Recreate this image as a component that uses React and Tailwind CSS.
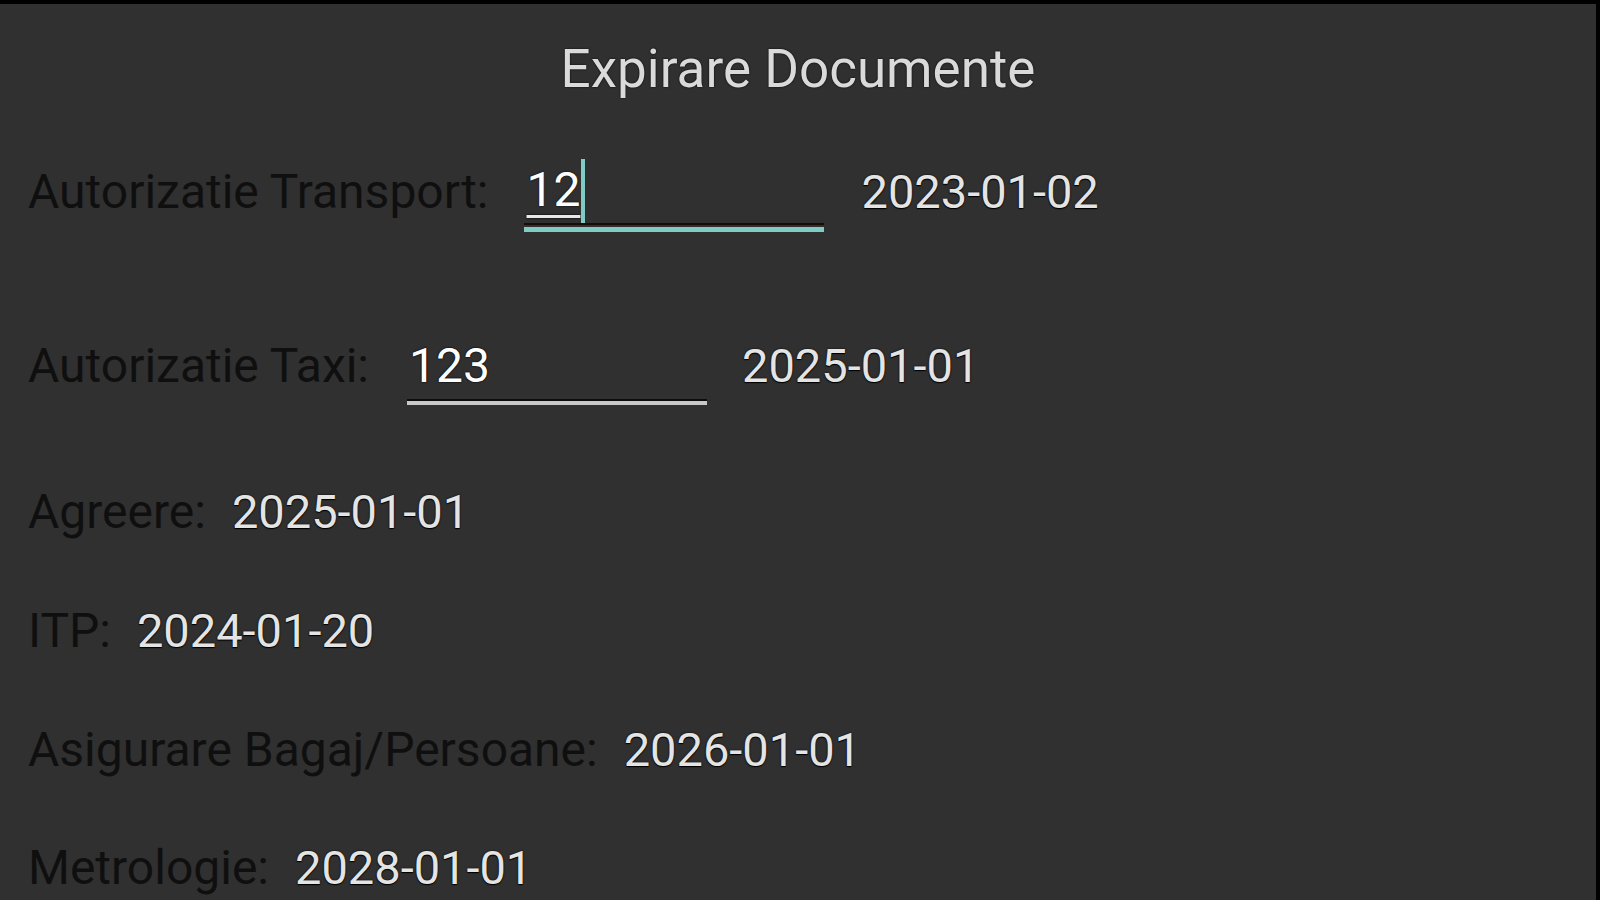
import React from 'react';

const font = { fontFamily: 'Roboto, "Noto Sans", sans-serif' };

const Value = ({ children, className = '' }) => (
  <span className={`text-[47px] text-[#e4e4e4] [text-shadow:0_0_2px_#000,0_1px_1px_#000] ${className}`}>{children}</span>
);

const Label = ({ children, className = '' }) => (
  <span className={`text-[#0f0f0f] ${className}`}>{children}</span>
);

const App = () => {
  return (
    <div
      className="h-screen w-full overflow-hidden bg-[#303030] border-t-4 border-r-4 border-black text-[48px] leading-[56px]"
      style={font}
    >
      {/* TITLE */}
      <div className="h-[130px] flex items-center justify-center">
        <h1 className="text-[53px] text-[#dadada] [text-shadow:0_0_2px_#000]">Expirare Documente</h1>
      </div>

      {/* AUTORIZATIE TRANSPORT */}
      <div className="flex items-start pl-[28px] mt-[23px]">
        <Label className="mt-[7px]">Autorizatie Transport:</Label>
        <div className="ml-[36px] w-[300px] flex flex-col">
          <div className="h-[66px] flex items-center pl-[2px]">
            <span className="text-white underline decoration-[3px] decoration-[#e8e8e8] underline-offset-[9px] [text-shadow:0_0_2px_#000]">12</span>
            <span className="w-[4px] h-[64px] bg-[#80cbc4] ml-[1px] mt-[2px]"></span>
          </div>
          <div className="h-[2px] bg-[#1a0a08]"></div>
          <div className="h-[2px]"></div>
          <div className="h-[5px] bg-[#80cbc4]"></div>
        </div>
        <Value className="ml-[37px] mt-[7px]">2023-01-02</Value>
      </div>

      {/* AUTORIZATIE TAXI */}
      <div className="flex items-start pl-[28px] mt-[100px]">
        <Label className="mt-[6px]">Autorizatie Taxi:</Label>
        <div className="ml-[38px] w-[300px] flex flex-col">
          <div className="h-[67px] flex items-center pl-[2px]">
            <span className="text-white [text-shadow:0_0_2px_#000,0_0_1px_#000]">123</span>
          </div>
          <div className="h-[2px] bg-[#0c0c0c]"></div>
          <div className="h-[4px] bg-[#c8c8c8]"></div>
        </div>
        <Value className="ml-[35px] mt-[6px]">2025-01-01</Value>
      </div>

      {/* REST */}
      <div className="flex items-center pl-[28px] mt-[79px] h-[56px]">
        <Label>Agreere:</Label>
        <Value className="ml-[26px]">2025-01-01</Value>
      </div>
      <div className="flex items-center pl-[28px] mt-[63px] h-[56px]">
        <Label>ITP:</Label>
        <Value className="ml-[26px]">2024-01-20</Value>
      </div>
      <div className="flex items-center pl-[28px] mt-[63px] h-[56px]">
        <Label>Asigurare Bagaj/Persoane:</Label>
        <Value className="ml-[26px]">2026-01-01</Value>
      </div>
      <div className="flex items-center pl-[28px] mt-[62px] h-[56px]">
        <Label>Metrologie:</Label>
        <Value className="ml-[26px]">2028-01-01</Value>
      </div>
    </div>
  );
};

export default App;
